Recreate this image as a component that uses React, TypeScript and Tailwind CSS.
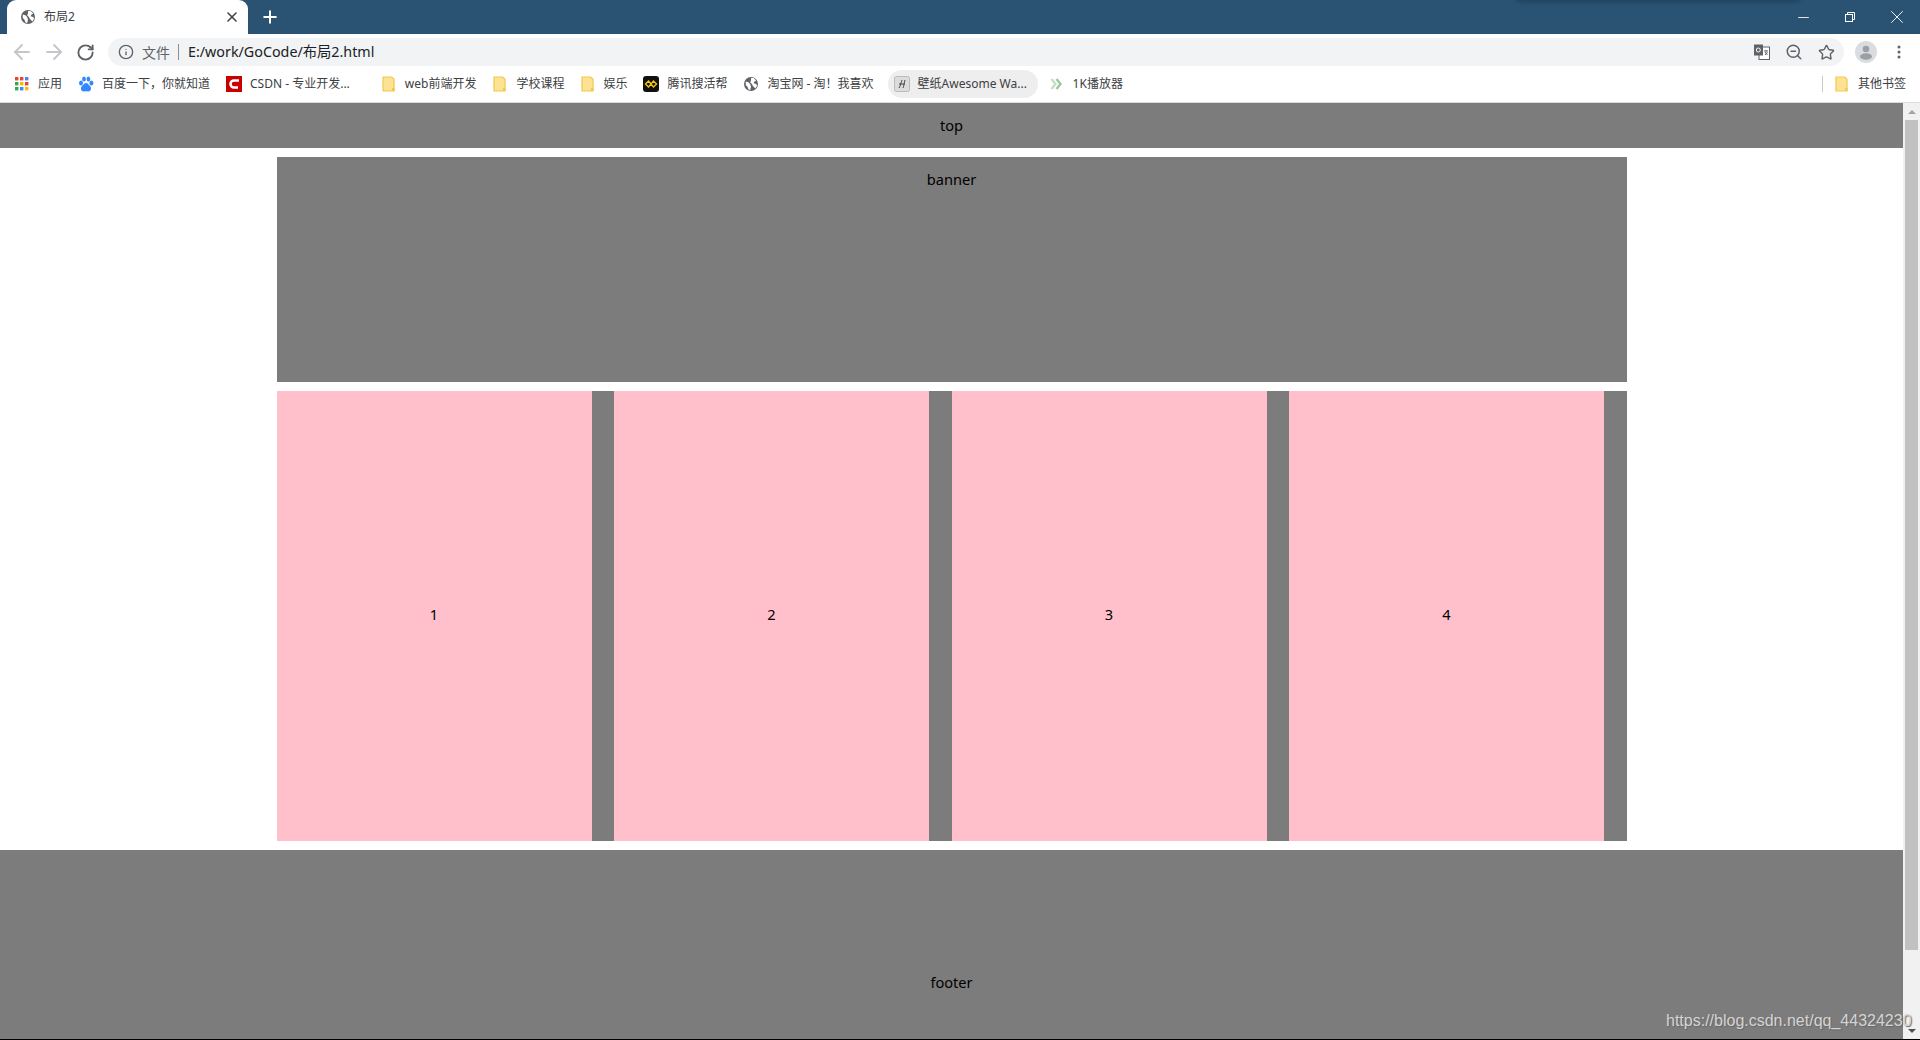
import { ReactNode } from "react";
import { ArrowLeft, ArrowRight, RotateCw, Info, ZoomOut, Star, X, Plus, Minus } from "lucide-react";

const uiFont = "font-['Noto_Sans','Noto_Sans_CJK_SC',sans-serif]";

const Globe = ({ size = 14 }: { size?: number }) => (
  <svg width={size} height={size} viewBox="0 0 16 16">
    <circle cx="8" cy="8" r="8" fill="#5f6368" />
    <path d="M2 5l3 1 2 2 1 3-1 4-2-1-1-3-2-2zM8 1l3 0 3 3-2 1-1 2 3 1 1 2-2 3-3-3-1-2-2-2 1-2z" fill="#fff" />
  </svg>
);

const Folder = () => (
  <svg width="13" height="16" viewBox="0 0 13 16">
    <path d="M1 1h8.5l2.500 2v12H1z" fill="#fde293" stroke="#f2c94c" strokeWidth="1.2" />
    <rect x="10" y="12" width="2.5" height="3" fill="#f2c94c" />
  </svg>
);

const Bookmark = ({ icon, label, className = "" }: { icon: ReactNode; label: string; className?: string }) => (
  <div className={`flex items-center gap-2 whitespace-nowrap text-[12px] text-[#3c4043] ${className}`}>
    {icon}
    <span>{label}</span>
  </div>
);

const Apps = () => (
  <svg width="14" height="14" viewBox="0 0 14 14">
    {[0, 5, 10].map((y, r) =>
      [0, 5, 10].map((x, c) => (
        <rect key={`${r}${c}`} x={x} y={y} width="3.4" height="3.4"
          fill={[["#ea4335", "#ea4335", "#4285f4"], ["#34a853", "#fbbc04", "#ea4335"], ["#34a853", "#4285f4", "#fbbc04"]][r][c]} />
      ))
    )}
  </svg>
);

const Baidu = () => (
  <svg width="16" height="17" viewBox="0 0 16 17" fill="#3388ff">
    <ellipse cx="3" cy="7" rx="2" ry="2.6" />
    <ellipse cx="6" cy="3" rx="1.9" ry="2.6" />
    <ellipse cx="10.4" cy="3" rx="1.9" ry="2.6" />
    <ellipse cx="13.4" cy="7" rx="2" ry="2.6" />
    <path d="M8 7c2 0 2.5 2 4 3 2 1.500 1 6-2 5.500-1-.2-3-.2-4 0-3 .5-4-4-2-5.500 1.500-1 2-3 4-3z" />
  </svg>
);

const Csdn = () => (
  <svg width="16" height="16" viewBox="0 0 16 16">
    <rect width="16" height="16" fill="#c90000" />
    <path d="M13 4.500H8a3.500 3.500 0 0 0 0 7h4" fill="none" stroke="#fff" strokeWidth="2.600" />
  </svg>
);

const Tencent = () => (
  <svg width="16" height="16" viewBox="0 0 16 16">
    <rect width="16" height="16" rx="3" fill="#111" />
    <path d="M2.500 8l3-3 2.500 3 2.500-3 3 3-3 3-2.500-3-2.500 3z" fill="none" stroke="#f5c518" strokeWidth="1.400" />
  </svg>
);

const Wallpaper = () => (
  <svg width="16" height="16" viewBox="0 0 16 16">
    <rect x=".5" y=".5" width="15" height="15" rx="2" fill="#dcdcdc" stroke="#bbb" />
    <path d="M5 12c2-3 2-6 3-8M11 4c-1 3-1 6-2 8M5 8h6" fill="none" stroke="#444" strokeWidth="1" />
  </svg>
);

const Player = () => (
  <svg width="13" height="14" viewBox="0 0 13 14" fill="none" strokeWidth="2.400">
    <path d="M1.500 2l4 5-4 5" stroke="#c4dfc4" />
    <path d="M6.500 2l4 5-4 5" stroke="#9cc79c" />
  </svg>
);

const Translate = () => (
  <svg width="16" height="16" viewBox="0 0 16 16">
    <rect x="5" y="3" width="10.500" height="12.500" fill="#fff" stroke="#5f6368" />
    <rect x="0" y="0.500" width="9" height="11" fill="#5f6368" />
    <circle cx="4.300" cy="6" r="2" fill="none" stroke="#fff" />
    <path d="M10 7h4M12 6v1M11 11l2.500-3M11 8l2.500 3" stroke="#5f6368" />
  </svg>
);

const Restore = () => (
  <svg width="10" height="10" viewBox="0 0 10 10" fill="none" stroke="#fff">
    <rect x=".5" y="2.500" width="7" height="7" />
    <path d="M2.500 2.500V.5h7v7h-2" />
  </svg>
);

const Avatar = () => (
  <svg width="22" height="22" viewBox="0 0 22 22">
    <circle cx="11" cy="11" r="11" fill="#dadce0" />
    <circle cx="11" cy="8" r="3.300" fill="#9aa0a6" />
    <ellipse cx="11" cy="15.500" rx="6" ry="3.300" fill="#9aa0a6" />
  </svg>
);

const Dots = () => (
  <svg width="4" height="14" viewBox="0 0 4 14" fill="#5f6368">
    <circle cx="2" cy="2" r="1.500" />
    <circle cx="2" cy="7" r="1.500" />
    <circle cx="2" cy="12" r="1.500" />
  </svg>
);

const Columns = () => (
  <div className="flex h-[450px]">
    {["1", "2", "3", "4"].map((n) => (
      <div key={n} className="flex-1 bg-[#7c7c7c] pr-[22.5px]">
        <div className="flex h-full items-center justify-center bg-[#ffc0cb] pb-[3px]">{n}</div>
      </div>
    ))}
  </div>
);

export default function App() {
  return (
    <div className={`relative flex h-[1040px] w-[1920px] flex-col overflow-hidden bg-white ${uiFont}`}>
      {/* title bar */}
      <div className="flex h-[34px] shrink-0 items-end bg-[#2a5272]">
        <div className="ml-[7px] flex h-[34px] w-[241px] items-center rounded-t-[9px] bg-white pl-[14px] pr-[8px] shadow-[-7px_7px_0_-7px_#fff,7px_7px_0_-7px_#fff]">
          <Globe />
          <span className="ml-[9px] flex-1 text-[12px] text-[#3c4043]">布局2</span>
          <X size={16} strokeWidth={2.4} className="text-[#444]" />
        </div>
        <Plus size={20} strokeWidth={2.4} className="mb-[7px] ml-[12px] text-white" />
        <div className="ml-auto flex h-full items-center pr-[12px]">
          <Minus size={17} strokeWidth={1.2} className="mr-[33px] text-white" />
          <Restore />
          <X size={22} strokeWidth={1} className="ml-[31px] text-white" />
        </div>
      </div>

      {/* address bar */}
      <div className="flex h-[36px] shrink-0 items-center bg-white pl-[10px] pr-[19px]">
        <ArrowLeft size={24} strokeWidth={1.8} className="text-[#c4c6c9]" />
        <ArrowRight size={24} strokeWidth={1.8} className="ml-[8px] text-[#c4c6c9]" />
        <RotateCw size={19} strokeWidth={2.4} className="ml-[10px] text-[#5f6368]" />
        <div className="ml-[13px] flex h-[28px] flex-1 items-center rounded-full bg-[#f1f3f4] pl-[10px] pr-[9px]">
          <Info size={16} strokeWidth={2} className="text-[#5f6368]" />
          <span className="ml-[8px] text-[14px] text-[#5f6368]">文件</span>
          <span className="ml-[8px] h-[16px] w-px bg-[#8a8d91]" />
          <span className="ml-[9px] text-[14.3px] text-[#202124]">E:/work/GoCode/布局2.html</span>
          <div className="ml-auto flex items-center gap-[15px]">
            <Translate />
            <ZoomOut size={18} strokeWidth={2} className="text-[#5f6368]" />
            <Star size={17} strokeWidth={2} className="text-[#5f6368]" />
          </div>
        </div>
        <div className="ml-[11px]"><Avatar /></div>
        <div className="ml-[20px]"><Dots /></div>
      </div>

      {/* bookmarks */}
      <div className="flex h-[33px] shrink-0 items-center border-b border-[#dadce0] pb-[4px] pl-[15px] pr-[14px]">
        <Bookmark icon={<Apps />} label="应用" className="gap-[9px]" />
        <Bookmark icon={<Baidu />} label="百度一下，你就知道" className="ml-[16px]" />
        <Bookmark icon={<Csdn />} label="CSDN - 专业开发..." className="ml-[16px]" />
        <Bookmark icon={<Folder />} label="web前端开发" className="ml-[32px] gap-[10px]" />
        <Bookmark icon={<Folder />} label="学校课程" className="ml-[17px] gap-[10px]" />
        <Bookmark icon={<Folder />} label="娱乐" className="ml-[17px] gap-[9px]" />
        <Bookmark icon={<Tencent />} label="腾讯搜活帮" className="ml-[16px]" />
        <Bookmark icon={<Globe />} label="淘宝网 - 淘！我喜欢" className="ml-[17px] gap-[9px]" />
        <Bookmark icon={<Wallpaper />} label="壁纸Awesome Wa..." className="ml-[14px] h-[28px] w-[150px] rounded-full bg-[#eeeeee] pl-[6px] pr-[8px]" />
        <Bookmark icon={<Player />} label="1K播放器" className="ml-[12px] gap-[10px]" />
        <div className="ml-auto flex items-center">
          <span className="mr-[12px] h-[16px] w-px bg-[#c8c8c8]" />
          <Bookmark icon={<Folder />} label="其他书签" className="gap-[10px]" />
        </div>
      </div>

      {/* page */}
      <div className="flex min-h-0 flex-1">
        <div className="min-w-0 flex-1 text-center text-[14.6px] text-black">
          <div className="h-[45px] bg-[#7c7c7c] leading-[45px]">top</div>
          <div className="mx-auto mt-[9px] w-[1350px]">
            <div className="h-[225px] bg-[#7c7c7c] leading-[45px]">banner</div>
            <div className="mt-[9px]"><Columns /></div>
          </div>
          <div className="mt-[9px] flex h-[189px] items-center justify-center bg-[#7c7c7c] pt-[76px]">footer</div>
        </div>

        {/* scrollbar */}
        <div className="flex h-[936px] w-[17px] shrink-0 flex-col items-center bg-[#f1f1f1]">
          <div className="mt-[7px] h-0 w-0 border-x-[4px] border-b-[4px] border-x-transparent border-b-[#a3a3a3]" />
          <div className="mt-[6px] h-[830px] w-[13px] bg-[#c1c1c1]" />
          <div className="mt-auto mb-[6px] h-0 w-0 border-x-[4px] border-t-[4px] border-x-transparent border-t-[#505050]" />
        </div>
      </div>

      <div className="h-px shrink-0 bg-black" />

      {/* shadow of a window above, along the top edge */}
      <div className="absolute left-[1517px] top-[-3px] h-[4px] w-[283px] bg-[#1c3a52] blur-[2px]" />

      {/* watermark */}
      <span className="absolute left-[1666px] top-[1009px] font-['Liberation_Sans',sans-serif] text-[16px] text-[#d4d4d4] [text-shadow:1px_1px_1px_#666]">
        https://blog.csdn.net/qq_44324230
      </span>
    </div>
  );
}
